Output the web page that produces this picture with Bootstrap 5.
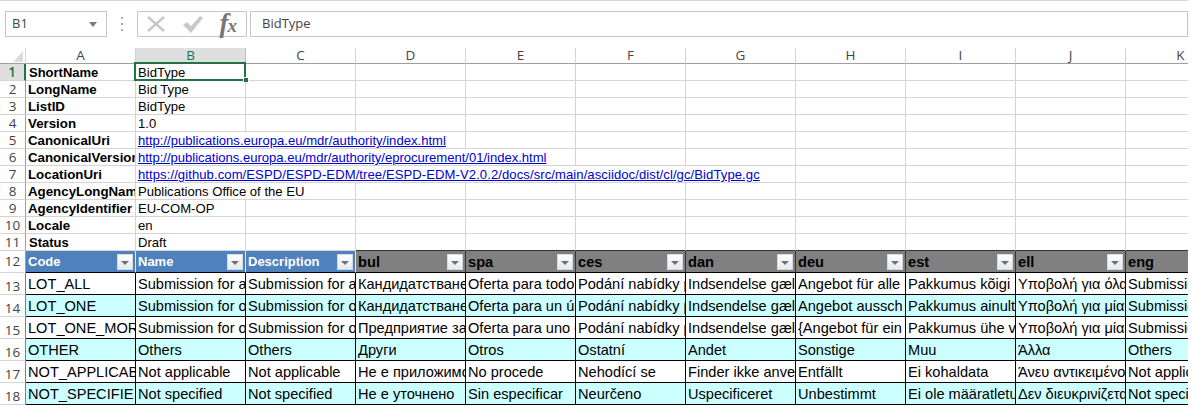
<!DOCTYPE html>
<html lang="en">
<head>
<meta charset="utf-8">
<title>BidType</title>
<link href="https://cdn.jsdelivr.net/npm/bootstrap@5.3.0/dist/css/bootstrap.min.css" rel="stylesheet">
<style>
html,body{height:408px;overflow:hidden;background:#fff}
body{font-family:"Liberation Sans",Arial,sans-serif;color:#000}
.xl-sheet{width:1188px;height:408px;overflow:hidden}
.xl-top{height:48px;border-top:1px solid #d4d4d4;padding:10px 0 0 5px}
.xl-box{height:26px;border:1px solid #c6c6c6;background:#fff;font-family:"Open Sans",sans-serif;font-size:13px;color:#444}
.xl-name{width:102px;padding:0 5px 0 6px}
.xl-arrow{width:0;height:0;border:4px solid transparent;border-top:5px solid #7a7a7a;border-bottom:0;margin-right:4px}
.xl-dots{width:30px;height:26px}
.xl-dots i{display:block;width:2px;height:2px;background:#a6a6a6;margin:2px 0}
.xl-btns{width:110px;padding:0 9px 0 8px}
.xl-fx{font-family:"Liberation Serif",serif;font-style:italic;font-weight:700;color:#767676;line-height:1;margin-top:-2px}
.xl-fx b{font-size:27px}
.xl-fx em{font-size:19px;margin-left:-1px}
.xl-formula{margin-left:3px;flex:1;padding-left:11px}
.xl-grid{border-collapse:separate;border-spacing:0;table-layout:fixed;width:1236px}
.xl-grid col{width:110px}
.xl-grid col.xl-col0{width:26px}
.xl-grid td{box-sizing:border-box;padding:0 2px;white-space:nowrap;overflow:hidden;border-right:1px solid #d4d4d4;border-bottom:1px solid #d4d4d4;font-weight:400;font-size:13.1px;line-height:15px;height:17px;vertical-align:bottom}
.xl-grid .xl-ch{height:16px;font-family:"Open Sans",sans-serif;font-size:13.5px;line-height:15px;text-align:center;color:#444;border-bottom-color:#9f9f9f;padding:0;overflow:visible}
.xl-grid .xl-ch.xl-on{background:#dfdfdf;color:#217346;border-bottom:1px solid #217346;border-right-color:#bdbdbd}
.xl-grid .xl-corner{padding:0}
.xl-corner svg{display:block;margin-left:12px}
.xl-grid .xl-rh{padding:0;text-align:center;font-family:"Open Sans",sans-serif;font-size:13.5px;color:#444;border-right:1px solid #9f9f9f;border-bottom-color:#d4d4d4;overflow:visible}
.xl-grid .xl-rh.xl-on{background:#dfdfdf;color:#217346;font-weight:600;border-right:2px solid #217346}
.xl-grid .xl-key{font-weight:700;font-size:13.3px}
.xl-grid .xl-key.xl-alt{font-size:13px;padding-left:3px}
.xl-grid .xl-link{color:#0000d4;text-decoration:underline}
.xl-grid .xl-tight{letter-spacing:-.03px}
.xl-grid .xl-wide{letter-spacing:.07px}
.xl-grid .xl-sel{position:relative;overflow:visible}
.xl-frame{position:absolute;left:-2px;top:-2px;width:112px;height:19px;border:2px solid #217346;pointer-events:none}
.xl-handle{position:absolute;right:-5px;bottom:-4px;width:6px;height:6px;background:#217346;border:1px solid #fff}
.xl-grid .xl-dark{border-bottom-color:#333}
.xl-grid .xl-head{height:22px;font-size:14.67px;font-weight:700;line-height:20px;border-right:1px solid #333;border-bottom:1px solid #000;vertical-align:middle;padding:0 1px 0 2px}
.xl-grid .xl-blue{background:#4f81bd;color:#fff;font-size:13px;border-right-color:#dfe8f3}
.xl-grid .xl-gray{background:#808080;color:#000}
.xl-filter{flex:none;width:16px;height:16px;background:linear-gradient(#fff,#e3e9f2);border:1px solid #d9d9d9;margin-right:1px}
.xl-filter::after{content:"";display:block;margin:6px auto 0;width:0;height:0;border:4px solid transparent;border-top:4px solid #707070;border-bottom:0}
.xl-grid .xl-data{height:22px;font-size:14.6px;line-height:20px;border-right:1px solid #000;border-bottom:1px solid #000;padding:0 0 0 2px}
.xl-cyan .xl-data{background:#ccffff}
.xl-grid .xl-rh.xl-h12{height:22px;vertical-align:middle}
.xl-grid .xl-rh.xl-low{vertical-align:bottom;border-right-color:#808080}
</style>
</head>
<body>
<div class="xl-sheet">
<div class="xl-top d-flex align-items-start">
  <div class="xl-box xl-name d-flex align-items-center justify-content-between"><span>B1</span><span class="xl-arrow"></span></div>
  <div class="xl-dots d-flex flex-column align-items-center justify-content-center"><i></i><i></i><i></i></div>
  <div class="xl-box xl-btns d-flex align-items-center justify-content-between">
    <svg width="20" height="18" viewBox="0 0 20 18"><path d="M2 2 L18 16 M18 2 L2 16" stroke="#c9c9c9" stroke-width="2.6" fill="none"/></svg>
    <svg width="22" height="20" viewBox="0 0 22 20" class="ms-2"><path d="M1 11 L5 8 L9 12 L18 2 L21 4 L9 19 Z" fill="#c9c9c9"/></svg>
    <span class="xl-fx ms-2"><b>f</b><em>x</em></span>
  </div>
  <div class="xl-box xl-formula d-flex align-items-center">BidType</div>
</div>
<table class="xl-grid">
<colgroup><col class="xl-col0"><col><col><col><col><col><col><col><col><col><col><col></colgroup>
<tr><td class="xl-ch xl-corner"><svg width="12" height="15" viewBox="0 0 12 15"><path d="M11 3 V14 H1 Z" fill="#dcdcdc"/></svg></td><td class="xl-ch">A</td><td class="xl-ch xl-on">B</td><td class="xl-ch">C</td><td class="xl-ch">D</td><td class="xl-ch">E</td><td class="xl-ch">F</td><td class="xl-ch">G</td><td class="xl-ch">H</td><td class="xl-ch">I</td><td class="xl-ch">J</td><td class="xl-ch">K</td></tr>
<tr><td class="xl-rh xl-on">1</td><td class="xl-key xl-alt">ShortName</td><td class="xl-sel">BidType<div class="xl-frame"><div class="xl-handle"></div></div></td><td></td><td></td><td></td><td></td><td></td><td></td><td></td><td></td><td></td></tr>
<tr><td class="xl-rh">2</td><td class="xl-key">LongName</td><td>Bid Type</td><td></td><td></td><td></td><td></td><td></td><td></td><td></td><td></td><td></td></tr>
<tr><td class="xl-rh">3</td><td class="xl-key">ListID</td><td>BidType</td><td></td><td></td><td></td><td></td><td></td><td></td><td></td><td></td><td></td></tr>
<tr><td class="xl-rh">4</td><td class="xl-key">Version</td><td>1.0</td><td></td><td></td><td></td><td></td><td></td><td></td><td></td><td></td><td></td></tr>
<tr><td class="xl-rh">5</td><td class="xl-key">CanonicalUri</td><td colspan="3" class="xl-link">http://publications.europa.eu/mdr/authority/index.html</td><td></td><td></td><td></td><td></td><td></td><td></td><td></td></tr>
<tr><td class="xl-rh">6</td><td class="xl-key">CanonicalVersion</td><td colspan="4" class="xl-link xl-tight">http://publications.europa.eu/mdr/authority/eprocurement/01/index.html</td><td></td><td></td><td></td><td></td><td></td><td></td></tr>
<tr><td class="xl-rh">7</td><td class="xl-key">LocationUri</td><td colspan="6" class="xl-link xl-wide">https://github.com/ESPD/ESPD-EDM/tree/ESPD-EDM-V2.0.2/docs/src/main/asciidoc/dist/cl/gc/BidType.gc</td><td></td><td></td><td></td><td></td></tr>
<tr><td class="xl-rh">8</td><td class="xl-key">AgencyLongNam</td><td colspan="2">Publications Office of the EU</td><td></td><td></td><td></td><td></td><td></td><td></td><td></td><td></td></tr>
<tr><td class="xl-rh">9</td><td class="xl-key">AgencyIdentifier</td><td>EU-COM-OP</td><td></td><td></td><td></td><td></td><td></td><td></td><td></td><td></td><td></td></tr>
<tr><td class="xl-rh">10</td><td class="xl-key">Locale</td><td>en</td><td></td><td></td><td></td><td></td><td></td><td></td><td></td><td></td><td></td></tr>
<tr><td class="xl-rh">11</td><td class="xl-key xl-alt">Status</td><td>Draft</td><td></td><td class="xl-dark"></td><td class="xl-dark"></td><td class="xl-dark"></td><td class="xl-dark"></td><td class="xl-dark"></td><td class="xl-dark"></td><td class="xl-dark"></td><td class="xl-dark"></td></tr>
<tr><td class="xl-rh xl-h12">12</td>
<td class="xl-head xl-blue"><div class="d-flex justify-content-between align-items-center"><span>Code</span><span class="xl-filter"></span></div></td>
<td class="xl-head xl-blue"><div class="d-flex justify-content-between align-items-center"><span>Name</span><span class="xl-filter"></span></div></td>
<td class="xl-head xl-blue"><div class="d-flex justify-content-between align-items-center"><span>Description</span><span class="xl-filter"></span></div></td>
<td class="xl-head xl-gray"><div class="d-flex justify-content-between align-items-center"><span>bul</span><span class="xl-filter"></span></div></td>
<td class="xl-head xl-gray"><div class="d-flex justify-content-between align-items-center"><span>spa</span><span class="xl-filter"></span></div></td>
<td class="xl-head xl-gray"><div class="d-flex justify-content-between align-items-center"><span>ces</span><span class="xl-filter"></span></div></td>
<td class="xl-head xl-gray"><div class="d-flex justify-content-between align-items-center"><span>dan</span><span class="xl-filter"></span></div></td>
<td class="xl-head xl-gray"><div class="d-flex justify-content-between align-items-center"><span>deu</span><span class="xl-filter"></span></div></td>
<td class="xl-head xl-gray"><div class="d-flex justify-content-between align-items-center"><span>est</span><span class="xl-filter"></span></div></td>
<td class="xl-head xl-gray"><div class="d-flex justify-content-between align-items-center"><span>ell</span><span class="xl-filter"></span></div></td>
<td class="xl-head xl-gray"><div class="d-flex justify-content-between align-items-center"><span>eng</span><span class="xl-filter"></span></div></td></tr>
<tr><td class="xl-rh xl-h12 xl-low">13</td><td class="xl-data">LOT_ALL</td><td class="xl-data">Submission for a</td><td class="xl-data">Submission for a</td><td class="xl-data">Кандидатстване</td><td class="xl-data">Oferta para todo</td><td class="xl-data">Podání nabídky p</td><td class="xl-data">Indsendelse gæl</td><td class="xl-data">Angebot für alle l</td><td class="xl-data">Pakkumus kõigi</td><td class="xl-data">Υποβολή για όλα</td><td class="xl-data">Submission</td></tr>
<tr class="xl-cyan"><td class="xl-rh xl-h12 xl-low">14</td><td class="xl-data">LOT_ONE</td><td class="xl-data">Submission for o</td><td class="xl-data">Submission for o</td><td class="xl-data">Кандидатстване</td><td class="xl-data">Oferta para un ú</td><td class="xl-data">Podání nabídky p</td><td class="xl-data">Indsendelse gæl</td><td class="xl-data">Angebot aussch</td><td class="xl-data">Pakkumus ainult</td><td class="xl-data">Υποβολή για μία</td><td class="xl-data">Submission</td></tr>
<tr><td class="xl-rh xl-h12 xl-low">15</td><td class="xl-data">LOT_ONE_MOR</td><td class="xl-data">Submission for o</td><td class="xl-data">Submission for o</td><td class="xl-data">Предприятие за</td><td class="xl-data">Oferta para uno o</td><td class="xl-data">Podání nabídky p</td><td class="xl-data">Indsendelse gæl</td><td class="xl-data">{Angebot für ein</td><td class="xl-data">Pakkumus ühe v</td><td class="xl-data">Υποβολή για μία</td><td class="xl-data">Submission</td></tr>
<tr class="xl-cyan"><td class="xl-rh xl-h12 xl-low">16</td><td class="xl-data">OTHER</td><td class="xl-data">Others</td><td class="xl-data">Others</td><td class="xl-data">Други</td><td class="xl-data">Otros</td><td class="xl-data">Ostatní</td><td class="xl-data">Andet</td><td class="xl-data">Sonstige</td><td class="xl-data">Muu</td><td class="xl-data">Άλλα</td><td class="xl-data">Others</td></tr>
<tr><td class="xl-rh xl-h12 xl-low">17</td><td class="xl-data">NOT_APPLICAB</td><td class="xl-data">Not applicable</td><td class="xl-data">Not applicable</td><td class="xl-data">Не е приложимо</td><td class="xl-data">No procede</td><td class="xl-data">Nehodící se</td><td class="xl-data">Finder ikke anve</td><td class="xl-data">Entfällt</td><td class="xl-data">Ei kohaldata</td><td class="xl-data">Άνευ αντικειμένο</td><td class="xl-data">Not applicable</td></tr>
<tr class="xl-cyan"><td class="xl-rh xl-h12 xl-low">18</td><td class="xl-data">NOT_SPECIFIE</td><td class="xl-data">Not specified</td><td class="xl-data">Not specified</td><td class="xl-data">Не е уточнено</td><td class="xl-data">Sin especificar</td><td class="xl-data">Neurčeno</td><td class="xl-data">Uspecificeret</td><td class="xl-data">Unbestimmt</td><td class="xl-data">Ei ole määratletu</td><td class="xl-data">Δεν διευκρινίζετα</td><td class="xl-data">Not specified</td></tr>
</table>
</div>
<script src="https://cdn.jsdelivr.net/npm/bootstrap@5.3.0/dist/js/bootstrap.bundle.min.js"></script>
</body>
</html>
